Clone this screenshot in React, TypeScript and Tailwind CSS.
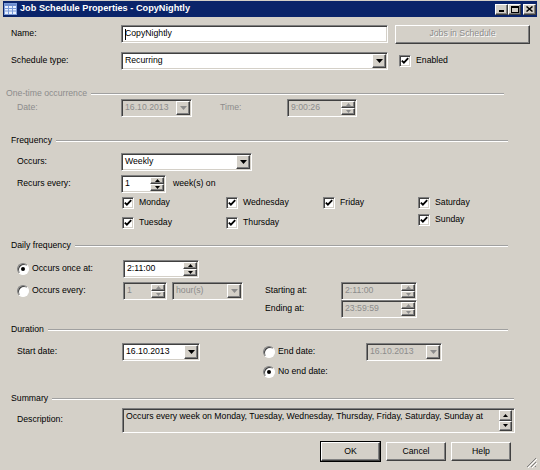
import React from 'react';

const sunken =
  'border border-t-[#808080] border-l-[#808080] border-b-white border-r-white shadow-[inset_1px_1px_0_#404040,inset_-1px_-1px_0_#d4d0c8]';
const raised =
  'border border-t-white border-l-white border-b-[#404040] border-r-[#404040] shadow-[inset_-1px_-1px_0_#808080]';
const dim = 'text-[#8c8c8c]';

function DownArrow({ disabled }: { disabled?: boolean }) {
  return (
    <div className={`w-[14px] h-full bg-[#d4d0c8] flex items-center justify-center ${raised}`}>
      <svg width="7" height="4" viewBox="0 0 7 4">
        <path d="M0 0h7L3.5 4z" fill={disabled ? '#8c8c8c' : '#000'} />
      </svg>
    </div>
  );
}

function Spin({ disabled }: { disabled?: boolean }) {
  const fill = disabled ? '#8c8c8c' : '#000';
  return (
    <div className="w-[14px] h-full flex flex-col">
      <div className={`flex-1 bg-[#d4d0c8] flex items-center justify-center ${raised}`}>
        <svg width="5" height="3" viewBox="0 0 5 3">
          <path d="M0 3h5L2.5 0z" fill={fill} />
        </svg>
      </div>
      <div className={`flex-1 bg-[#d4d0c8] flex items-center justify-center ${raised}`}>
        <svg width="5" height="3" viewBox="0 0 5 3">
          <path d="M0 0h5L2.5 3z" fill={fill} />
        </svg>
      </div>
    </div>
  );
}

function Field({
  w,
  value,
  disabled,
  kind,
  caret,
}: {
  w: number;
  value: string;
  disabled?: boolean;
  kind?: 'drop' | 'spin';
  caret?: boolean;
}) {
  return (
    <div
      className={`h-[18px] flex items-stretch p-[1px] ${sunken} ${disabled ? 'bg-[#d4d0c8]' : 'bg-white'}`}
      style={{ width: w }}
    >
      <div className={`flex-1 flex items-center pl-[2px] relative ${disabled ? dim : 'text-black'}`}>
        {caret && <span className="absolute left-[2px] top-[2px] w-[1px] h-[11px] bg-black" />}
        {value}
      </div>
      {kind === 'drop' && <DownArrow disabled={disabled} />}
      {kind === 'spin' && <Spin disabled={disabled} />}
    </div>
  );
}

function Check({ label }: { label: string }) {
  return (
    <div className="flex items-center h-[16px] gap-[5px]">
      <span className={`w-[12px] h-[12px] bg-white flex items-center justify-center ${sunken}`}>
        <svg width="8" height="8" viewBox="0 0 8 8">
          <path d="M0.8 3.6 L2.9 5.7 L7.2 1.2" stroke="#000" strokeWidth="1.8" fill="none" />
        </svg>
      </span>
      <span>{label}</span>
    </div>
  );
}

function Radio({ checked }: { checked?: boolean }) {
  return (
    <span className="w-[12px] h-[12px] rounded-full border border-t-[#808080] border-l-[#808080] border-b-white border-r-white bg-white shadow-[inset_1px_1px_0_#404040] flex items-center justify-center shrink-0">
      {checked && <span className="w-[4px] h-[4px] rounded-full bg-black" />}
    </span>
  );
}

function Group({ label, w, disabled, ml = 0 }: { label: string; w: number; disabled?: boolean; ml?: number }) {
  return (
    <div className="flex items-center h-[10px]" style={{ width: w, marginLeft: ml }}>
      <span className={disabled ? dim : ''}>{label}</span>
      <div className="flex-1 ml-[4px] h-0 border-t border-t-[#a0a0a0] border-b border-b-white" />
    </div>
  );
}

function Btn({ w, label, isDefault, disabled }: { w: number; label: string; isDefault?: boolean; disabled?: boolean }) {
  return (
    <div className={isDefault ? 'border border-black' : ''}>
      <div
        className={`h-[19px] bg-[#d4d0c8] flex items-center justify-center ${raised} ${
          disabled ? 'text-[#8c8c8c] [text-shadow:1px_1px_0_#fff]' : ''
        } ${isDefault ? 'h-[17px]' : ''}`}
        style={{ width: isDefault ? w - 2 : w }}
      >
        {label}
      </div>
    </div>
  );
}

export default function App() {
  return (
    <div className="w-[540px] h-[470px] bg-[#d4d0c8] pt-[1px] px-[3px] relative overflow-hidden font-['Liberation_Sans',Arial,sans-serif] text-[8.7px] text-black">
      {/* title bar */}
      <div className="h-[16px] bg-[#0a246a] flex items-center pl-[1px] pr-[1px]">
        <svg width="13" height="12" viewBox="0 0 13 12">
          <rect x="0.5" y="0.5" width="12" height="11" fill="#e8f0ff" stroke="#7a9ad8" />
          <rect x="1" y="1" width="11" height="2" fill="#6f8fd0" />
          <path d="M4.5 3v8M8.5 3v8M1 5.5h11M1 8h11" stroke="#7a9ad8" />
        </svg>
        <span className="ml-[3px] text-white font-bold text-[9.2px] flex-1">Job Schedule Properties - CopyNightly</span>
        <div className="flex items-center">
          <div className={`w-[13px] h-[11px] bg-[#d4d0c8] flex items-end justify-center pb-[2px] ${raised}`}>
            <span className="w-[5px] h-[2px] bg-black" />
          </div>
          <div className={`w-[13px] h-[11px] bg-[#d4d0c8] flex items-center justify-center ${raised}`}>
            <span className="w-[8px] h-[7px] border border-black border-t-2" />
          </div>
          <div className={`ml-[2px] w-[13px] h-[11px] bg-[#d4d0c8] flex items-center justify-center ${raised}`}>
            <svg width="7" height="6" viewBox="0 0 7 6">
              <path d="M0.5 0.5L6.5 5.5M6.5 0.5L0.5 5.5" stroke="#000" strokeWidth="1.5" />
            </svg>
          </div>
        </div>
      </div>

      <div className="pl-[8px]">
        {/* Name */}
        <div className="flex items-center h-[18px] mt-[8px]">
          <span className="w-[110px]">Name:</span>
          <Field w={267} value="CopyNightly" caret />
          <div className="ml-[7px]">
            <Btn w={135} label="Jobs in Schedule" disabled />
          </div>
        </div>

        {/* Schedule type */}
        <div className="flex items-center h-[18px] mt-[9px]">
          <span className="w-[110px]">Schedule type:</span>
          <Field w={267} value="Recurring" kind="drop" />
          <div className="ml-[11px]">
            <Check label="Enabled" />
          </div>
        </div>

        <div className="mt-[19px]">
          <Group label="One-time occurrence" w={498} ml={-5} disabled />
        </div>
        <div className={`flex items-center h-[18px] pl-[6px] ${dim}`}>
          <span className="w-[104px]">Date:</span>
          <Field w={71} value="16.10.2013" kind="drop" disabled />
          <span className="ml-[28px] w-[67px]">Time:</span>
          <Field w={70} value="9:00:26" kind="spin" disabled />
        </div>

        <div className="mt-[19px]">
          <Group label="Frequency" w={497} />
        </div>
        <div className="flex items-center h-[18px] mt-[7px] pl-[6px]">
          <span className="w-[104px]">Occurs:</span>
          <Field w={131} value="Weekly" kind="drop" />
        </div>
        <div className="flex items-center h-[18px] mt-[4px] pl-[6px]">
          <span className="w-[104px]">Recurs every:</span>
          <Field w={45} value="1" kind="spin" />
          <span className="ml-[7px]">week(s) on</span>
        </div>
        <div className="flex mt-[2px] pl-[111px]">
          <div className="w-[104px] flex flex-col gap-[4px]">
            <Check label="Monday" />
            <Check label="Tuesday" />
          </div>
          <div className="w-[97px] flex flex-col gap-[4px]">
            <Check label="Wednesday" />
            <Check label="Thursday" />
          </div>
          <div className="w-[95px] flex flex-col">
            <Check label="Friday" />
          </div>
          <div className="flex flex-col gap-[1px]">
            <Check label="Saturday" />
            <Check label="Sunday" />
          </div>
        </div>

        <div className="mt-[10px]">
          <Group label="Daily frequency" w={497} />
        </div>
        <div className="flex items-center h-[18px] mt-[9px] pl-[6px]">
          <div className="w-[106px] flex items-center gap-[3px]">
            <Radio checked />
            <span>Occurs once at:</span>
          </div>
          <Field w={76} value="2:11:00" kind="spin" />
        </div>
        <div className="flex items-center h-[18px] mt-[4px] pl-[6px]">
          <div className="w-[106px] flex items-center gap-[3px]">
            <Radio />
            <span>Occurs every:</span>
          </div>
          <Field w={44} value="1" kind="spin" disabled />
          <div className="ml-[5px]">
            <Field w={71} value="hour(s)" kind="drop" disabled />
          </div>
          <span className="ml-[22px] w-[76px]">Starting at:</span>
          <Field w={76} value="2:11:00" kind="spin" disabled />
        </div>
        <div className="flex items-center h-[18px] pl-[254px]">
          <span className="w-[76px]">Ending at:</span>
          <Field w={76} value="23:59:59" kind="spin" disabled />
        </div>

        <div className="mt-[7px]">
          <Group label="Duration" w={497} />
        </div>
        <div className="flex items-center h-[18px] mt-[8px] pl-[6px]">
          <span className="w-[105px]">Start date:</span>
          <Field w={78} value="16.10.2013" kind="drop" />
          <div className="ml-[63px] w-[103px] flex items-center gap-[3px]">
            <Radio />
            <span>End date:</span>
          </div>
          <Field w={76} value="16.10.2013" kind="drop" disabled />
        </div>
        <div className="flex items-center h-[16px] mt-[3px] pl-[252px] gap-[3px]">
          <Radio checked />
          <span>No end date:</span>
        </div>

        <div className="mt-[14px]">
          <Group label="Summary" w={503} />
        </div>
        <div className="flex items-start h-[25px] mt-[4px] pl-[6px]">
          <span className="w-[105px] mt-[5px]">Description:</span>
          <div className={`w-[393px] h-[25px] bg-[#d4d0c8] flex p-[1px] ${sunken}`}>
            <div className="flex-1 pl-[2px] pt-[1px] leading-[11px] whitespace-nowrap overflow-hidden">
              Occurs every week on Monday, Tuesday, Wednesday, Thursday, Friday, Saturday, Sunday at
            </div>
            <div className="w-[13px] flex flex-col mr-[1px]">
              <div className={`h-[11px] bg-[#d4d0c8] flex items-center justify-center ${raised}`}>
                <svg width="5" height="3" viewBox="0 0 5 3">
                  <path d="M0 3h5L2.5 0z" fill="#000" />
                </svg>
              </div>
              <div className="flex-1" />
              <div className={`h-[11px] bg-[#d4d0c8] flex items-center justify-center ${raised}`}>
                <svg width="5" height="3" viewBox="0 0 5 3">
                  <path d="M0 0h5L2.5 3z" fill="#000" />
                </svg>
              </div>
            </div>
          </div>
        </div>

        <div className="flex items-center mt-[8px] pl-[309px] gap-[5px]">
          <Btn w={61} label="OK" isDefault />
          <Btn w={60} label="Cancel" />
          <Btn w={60} label="Help" />
        </div>
      </div>

      {/* size grip */}
      <svg className="absolute right-[3px] bottom-[2px]" width="11" height="11" viewBox="0 0 11 11">
        <path d="M10 1L1 10M10 5L5 10M10 9L9 10" stroke="#808080" strokeWidth="1" />
        <path d="M11 2L2 11M11 6L6 11" stroke="#fff" strokeWidth="1" />
      </svg>
    </div>
  );
}
